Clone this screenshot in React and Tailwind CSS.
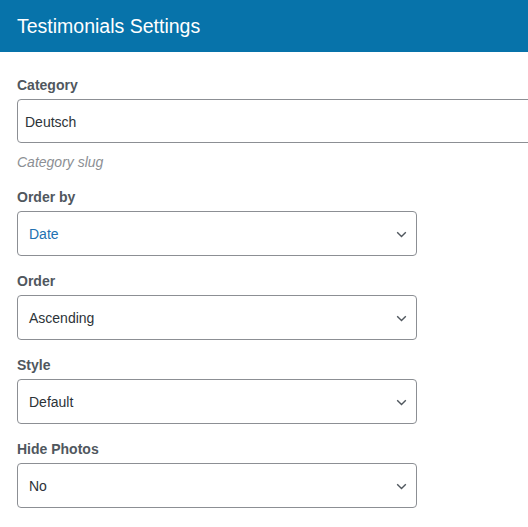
import React from "react";

function Chevron() {
  return (
    <svg width="11" height="7" viewBox="0 0 11 7" fill="none" className="shrink-0 mt-[2px]">
      <path d="M1.2 1.2l4.3 4.3 4.3-4.3" stroke="#50575e" strokeWidth="1.4" />
    </svg>
  );
}

function SelectField({ label, value, blue }) {
  return (
    <div className="flex flex-col">
      <div className="h-5 leading-5 text-[14px] font-semibold text-[#50575e] mb-1">{label}</div>
      <div className="w-[400px] h-[45px] border border-[#8c8f94] rounded-[4px] bg-white flex items-center justify-between pl-[11px] pr-[9px]">
        <span className={"text-[14px] pt-[2px] " + (blue ? "text-[#2271b1]" : "text-[#2c3338]")}>{value}</span>
        <Chevron />
      </div>
    </div>
  );
}

export default function App() {
  return (
    <div
      className="w-full h-[527px] overflow-hidden bg-white"
      style={{ fontFamily: '"Liberation Sans", Arial, sans-serif' }}
    >
      <div className="h-[52px] bg-[#0773aa] flex items-center pl-[17px]">
        <span className="text-white text-[19.5px] leading-none pt-[1px]">Testimonials Settings</span>
      </div>
      <div className="pl-[17px] pt-[23px] flex flex-col">
        <div className="h-5 leading-5 text-[14px] font-semibold text-[#50575e] mb-1">Category</div>
        <div className="w-[600px] h-[44px] border border-[#8c8f94] rounded-[4px] bg-white flex items-center pl-[7px]">
          <span className="text-[14px] text-[#2c3338] pt-[3px]">Deutsch</span>
        </div>
        <div className="h-5 leading-5 mt-[9px] text-[14px] italic text-[#8c8f94]">Category slug</div>
        <div className="mt-[15px] flex flex-col gap-[15px]">
          <SelectField label="Order by" value="Date" blue />
          <SelectField label="Order" value="Ascending" />
          <SelectField label="Style" value="Default" />
          <SelectField label="Hide Photos" value="No" />
        </div>
      </div>
    </div>
  );
}
